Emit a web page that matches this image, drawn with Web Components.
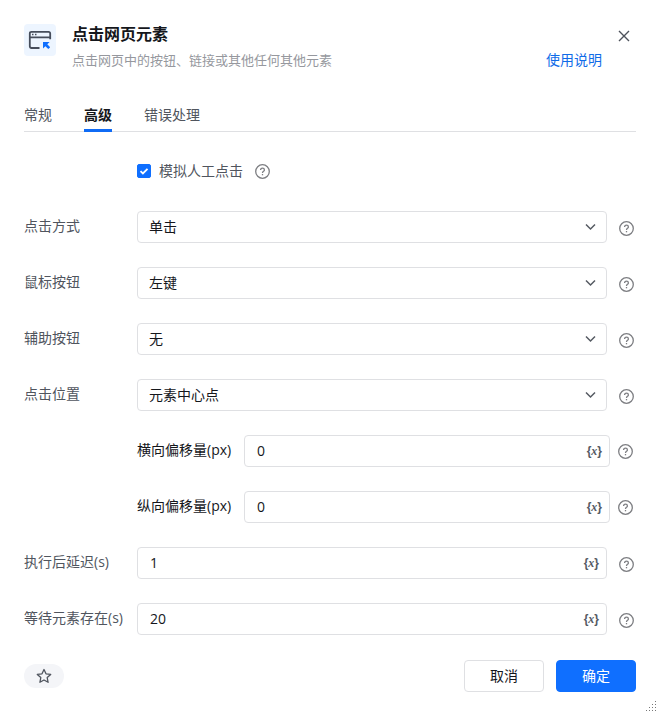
<!DOCTYPE html>
<html lang="zh-CN">
<head>
<meta charset="utf-8">
<meta name="viewport" content="width=device-width,initial-scale=1">
<title>点击网页元素</title>
<style>
html,body{margin:0;background:#fff}
body{font:14px/20px "Open Sans","Noto Sans CJK SC",sans-serif;color:#15171c}
</style>
</head>
<body>
<step-dialog>
  <dialog-header slot="header" heading="点击网页元素" note="点击网页中的按钮、链接或其他任何其他元素" link="使用说明"></dialog-header>
  <tab-bar slot="tabs" tabs="常规,高级,错误处理" active="1"></tab-bar>
  <check-field label="模拟人工点击" checked></check-field>
  <select-field label="点击方式" options="单击,双击"></select-field>
  <select-field label="鼠标按钮" options="左键,右键,中键"></select-field>
  <select-field label="辅助按钮" options="无,Alt,Ctrl,Shift"></select-field>
  <select-field label="点击位置" options="元素中心点,随机位置"></select-field>
  <text-field label="横向偏移量(px)" value="0" nested></text-field>
  <text-field label="纵向偏移量(px)" value="0" nested></text-field>
  <text-field label="执行后延迟(s)" value="1"></text-field>
  <text-field label="等待元素存在(s)" value="20"></text-field>
  <dialog-footer slot="footer">
    <action-button>取消</action-button>
    <action-button primary>确定</action-button>
  </dialog-footer>
</step-dialog>
<script>
const base=`
*{box-sizing:border-box}
button,input,select{font:inherit;color:inherit;margin:0}
button{padding:0;border:0;background:none;cursor:pointer}
svg{display:block}
`;

class StepDialog extends HTMLElement{
constructor(){
  super();
  this.attachShadow({mode:'open'}).innerHTML=`<style>${base}
:host{position:relative;display:flex;flex-direction:column;box-sizing:border-box;min-height:100vh;padding:24px}
main{display:flex;flex-direction:column;gap:24px;padding:23px 0 24px}
.grip{position:absolute;right:3px;bottom:4px;fill:#777}
</style>
<slot name="header"></slot>
<slot name="tabs"></slot>
<main><slot></slot></main>
<slot name="footer"></slot>
<svg class="grip" width="11" height="11" viewBox="0 0 11 11" shape-rendering="crispEdges" aria-hidden="true"><path d="M9 0h1v1h-1zM6 3h1v1h-1zM9 3h1v1h-1zM3 6h1v1h-1zM6 6h1v1h-1zM9 6h1v1h-1zM0 9h1v1h-1zM3 9h1v1h-1zM6 9h1v1h-1zM9 9h1v1h-1z"/></svg>`;
}
}

class DialogHeader extends HTMLElement{
connectedCallback(){
  this.attachShadow({mode:'open'}).innerHTML=`<style>${base}
:host{display:flex;gap:16px}
.logo{flex:none;width:32px;height:32px;border-radius:4px;background:#edf5ff}
.text{flex:1;min-width:0}
h1{margin:0 0 6px;font-size:16px;line-height:20px;font-weight:700}
p{margin:0;font-size:13px;line-height:20px;color:#96989e}
.side{display:flex;align-items:flex-start;gap:10px}
a{align-self:flex-end;color:#0f6be8;text-decoration:none}
button{display:grid;place-items:center;width:24px;height:24px;color:#4d525b}
</style>
<svg class="logo" viewBox="0 0 32 32" fill="none" aria-hidden="true">
<path d="M15.500 24H7.500Q5.800 24 5.800 22.300V9.500Q5.800 7.800 7.500 7.800H24.500Q26.200 7.800 26.200 9.500V15.200M6 13.300H26" stroke="#464d5b" stroke-width="1.800"/>
<path d="M8 10.500h1.500M11 10.500h1.500" stroke="#464d5b" stroke-width="1.400"/>
<path d="M19 18h6.600l-2.300 2.300 2.900 2.900-1.900 1.900-2.900-2.900L19 24.600z" fill="#0f6fff"/>
</svg>
<div class="text"><h1></h1><p></p></div>
<div class="side"><a href="#help"></a><button aria-label="关闭"><svg width="12" height="12" viewBox="0 0 12 12" fill="none" stroke="currentColor" stroke-width="1.400"><path d="M1 1l10 10M11 1L1 11"/></svg></button></div>`;
  const $=s=>this.shadowRoot.querySelector(s);
  $('h1').textContent=this.getAttribute('heading');
  $('p').textContent=this.getAttribute('note');
  $('a').textContent=this.getAttribute('link');
}
}

class TabBar extends HTMLElement{
connectedCallback(){
  const active=Number(this.getAttribute('active'));
  const tabs=this.getAttribute('tabs').split(',');
  this.attachShadow({mode:'open'}).innerHTML=`<style>${base}
:host{display:block;margin-top:35px;border-bottom:1px solid #dfe0e3}
nav{display:flex;gap:32px;margin-bottom:-1px}
button{height:27px;padding-bottom:4px;border-bottom:3px solid transparent;line-height:20px;color:#50555e}
button[aria-selected=true]{border-color:#0f6bf5;color:#15171c;font-weight:700}
</style>
<nav role="tablist">${tabs.map((t,i)=>`<button role="tab" aria-selected="${i===active}">${t}</button>`).join('')}</nav>`;
  const buttons=[...this.shadowRoot.querySelectorAll('button')];
  buttons.forEach(b=>b.addEventListener('click',()=>{
    buttons.forEach(o=>o.setAttribute('aria-selected',o===b));
  }));
}
}

class HelpTip extends HTMLElement{
constructor(){
  super();
  this.attachShadow({mode:'open'}).innerHTML=`<style>${base}
:host{display:block;flex:none;color:#7d7e82}
button{display:block;color:inherit}
</style>
<button aria-label="帮助"><svg width="15" height="15" viewBox="0 0 15 15" fill="none" stroke="currentColor" stroke-width="1.300"><circle cx="7.500" cy="7.500" r="6.800"/><path d="M5.600 6.100C5.600 4.800 6.400 4.200 7.500 4.200s1.900.7 1.900 1.700c0 1.400-1.900 1.500-1.900 3.100"/><path d="M7.500 10V11.300"/></svg></button>`;
}
}

class CheckField extends HTMLElement{
connectedCallback(){
  this.attachShadow({mode:'open'}).innerHTML=`<style>${base}
:host{display:flex;align-items:center;gap:12px;height:32px;padding-left:113px}
label{display:flex;align-items:center;gap:8px;color:#50555e}
.box{display:grid}
.box>*{grid-area:1/1}
input{appearance:none;width:14px;height:14px;border:1px solid #c4c6cb;border-radius:2px}
input:checked{border-color:#0f6fff;background:#0f6fff}
svg{pointer-events:none}
</style>
<label><span class="box"><input type="checkbox"><svg width="14" height="14" viewBox="0 0 14 14" fill="none" stroke="#fff" stroke-width="1.800"><path d="M3.500 7.200l2.400 2.300 4.600-4.700"/></svg></span><span class="name"></span></label>
<help-tip></help-tip>`;
  this.shadowRoot.querySelector('.name').textContent=this.getAttribute('label');
  this.shadowRoot.querySelector('input').checked=this.hasAttribute('checked');
}
}

// label, bordered control and help icon in one line
class BaseField extends HTMLElement{
connectedCallback(){
  this.attachShadow({mode:'open'}).innerHTML=`<style>${base}
:host{display:flex;align-items:center;padding-right:2px}
label{flex:none;width:113px;padding-bottom:2px;color:#50555e;white-space:nowrap}
.box{flex:1;min-width:0;display:flex;align-items:center;height:32px;border:1px solid #dfe0e3;border-radius:4px;background:#fff}
.box:focus-within{border-color:#0f6fff}
help-tip{margin-left:12px;padding-top:2px}
:host([nested]){padding-left:113px;padding-right:3px}
:host([nested]) label{width:107px;color:#15171c}
:host([nested]) help-tip{margin-left:8px;padding-top:0}
input,select{flex:1;min-width:0;height:100%;border:0;outline:0;background:none}
input{padding:0 12px 2px}
select{appearance:none;padding:0 11px}
.arrow{flex:none;margin-left:-21px;margin-right:10px;pointer-events:none}
.var{flex:none;margin-right:7px;font:700 12px/16px "Liberation Sans",sans-serif;color:#555a64}
.var i{font-family:"Liberation Serif",serif}
</style>
<label for="control"></label>
<div class="box">${this.control()}</div>
<help-tip></help-tip>`;
  this.shadowRoot.querySelector('label').textContent=this.getAttribute('label');
}
}

class SelectField extends BaseField{
control(){
  const options=this.getAttribute('options').split(',');
  return `<select id="control">${options.map(o=>`<option>${o}</option>`).join('')}</select>
<svg class="arrow" width="11" height="8" viewBox="0 0 11 8" fill="none" stroke="#555a62" stroke-width="1.500"><path d="M1 1.500l4.500 4.500L10 1.500"/></svg>`;
}
}

class TextField extends BaseField{
control(){
  return `<input id="control" type="text" value="${this.getAttribute('value')}"><button class="var" aria-label="选择变量">{<i>x</i>}</button>`;
}
}

class DialogFooter extends HTMLElement{
constructor(){
  super();
  this.attachShadow({mode:'open'}).innerHTML=`<style>${base}
:host{display:flex;align-items:center;justify-content:space-between;margin-top:auto}
.star{display:grid;place-items:center;width:40px;height:24px;border-radius:12px;background:#f4f5f8;color:#50555e}
.actions{display:flex;gap:12px}
</style>
<button class="star" aria-label="收藏"><svg width="16" height="16" viewBox="0 0 16 16" fill="none" stroke="currentColor" stroke-width="1.300" stroke-linejoin="round"><path d="M8 1.500l2 4.300 4.700.6-3.500 3.200.9 4.700L8 12l-4.100 2.300.9-4.700L1.300 6.400 6 5.800z"/></svg></button>
<div class="actions"><slot></slot></div>`;
}
}

class ActionButton extends HTMLElement{
constructor(){
  super();
  this.attachShadow({mode:'open'}).innerHTML=`<style>${base}
:host{display:block}
button{display:block;min-width:80px;height:32px;padding:0 16px;border:1px solid #dfe0e3;border-radius:4px;background:#fff}
:host([primary]) button{border-color:#0f6fff;background:#0f6fff;color:#fff}
</style><button><slot></slot></button>`;
}
}

customElements.define('step-dialog',StepDialog);
customElements.define('dialog-header',DialogHeader);
customElements.define('tab-bar',TabBar);
customElements.define('help-tip',HelpTip);
customElements.define('check-field',CheckField);
customElements.define('select-field',SelectField);
customElements.define('text-field',TextField);
customElements.define('dialog-footer',DialogFooter);
customElements.define('action-button',ActionButton);
</script>
</body>
</html>
